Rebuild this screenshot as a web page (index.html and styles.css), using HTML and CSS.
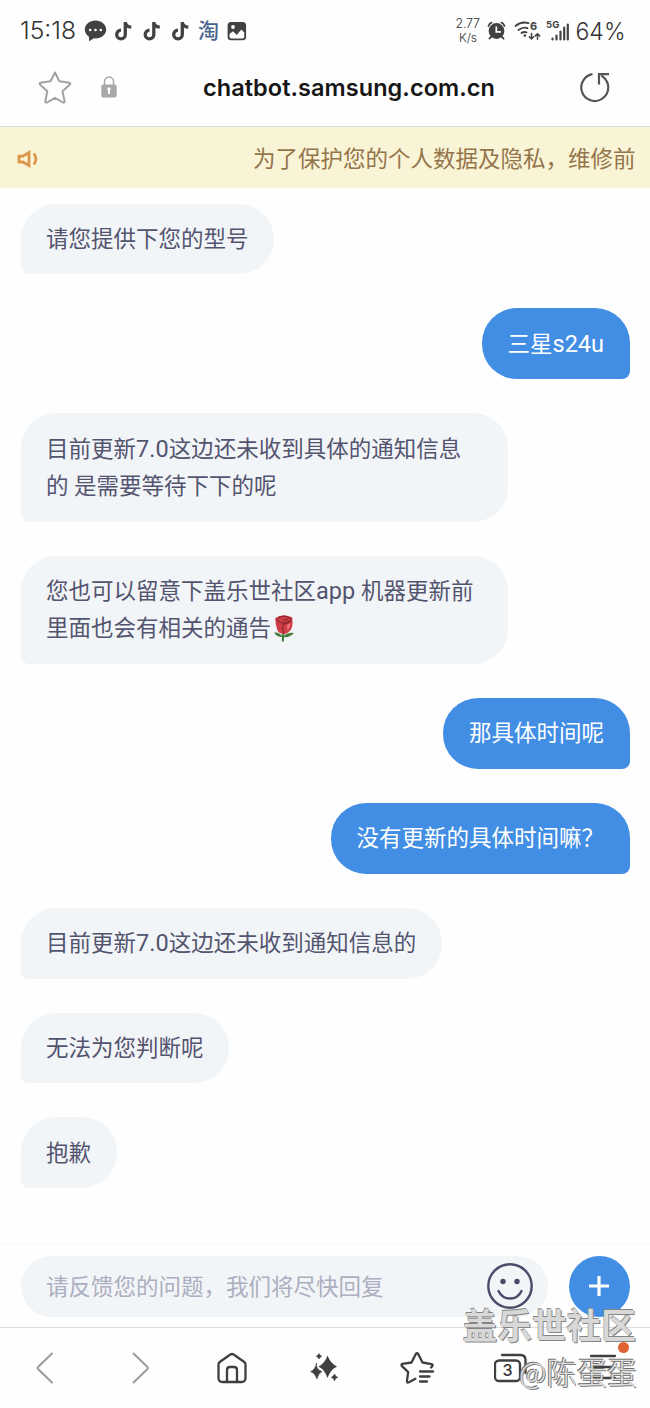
FILE: index.html
```html
<!DOCTYPE html>
<html lang="zh-CN">
<head>
<meta charset="utf-8">
<title>chatbot.samsung.com.cn</title>
<link rel="stylesheet" href="styles.css">
</head>
<body>
<div class="phone">
  <header class="status">
    <svg class="status-art" width="650" height="60" viewBox="0 0 650 60">
      <text class="status-text" x="20" y="39" font-size="24" textLength="56" lengthAdjust="spacingAndGlyphs">15:18</text>
      <path fill="#424242" d="M95.500 20.500c-6 0-10.700 4-10.700 9 0 3 1.600 5.500 4 7.100l.4 4.600 4.600-2.900 1.700.1c6 0 10.700-4 10.700-8.900s-4.700-9-10.700-9z"/>
      <g fill="#fff"><circle cx="90.200" cy="30" r="1.300"/><circle cx="95.500" cy="30" r="1.300"/><circle cx="100.800" cy="30" r="1.300"/></g>
      <g fill="none" stroke="#424242" stroke-width="3.300">
        <path id="note" d="M125.300 22v12.500a4.300 4.300 0 1 1-4.300-4.300M125.300 22.500c.4 2.800 2.300 4.400 6 4.600"/>
        <use href="#note" x="28.500"/><use href="#note" x="57"/>
      </g>
      <text class="app-glyph" x="198" y="38" font-size="21">淘</text>
      <rect x="227.600" y="22" width="18.500" height="18.300" rx="3.500" fill="#424242"/>
      <circle cx="233" cy="27" r="1.900" fill="#fff"/>
      <path fill="#fff" d="M229.500 34l3.500-2.700 3.800 3.700 4.500-5.500 3 3v4.300q0 1.700-1.700 1.700h-11.400q-1.700 0-1.700-1.700z"/>

      <text class="status-text" x="455.500" y="28" font-size="12.500" textLength="24.500">2.77</text>
      <text class="status-text" x="459" y="42" font-size="12" textLength="18">K/s</text>
      <circle cx="496.500" cy="31" r="7.900" fill="#424242"/>
      <path fill="none" stroke="#424242" stroke-width="1.800" stroke-linecap="round" d="M488.500 26q.8-2.400 3-3.300M504.500 26q-.8-2.400-3-3.300M491.500 36.500l-2 2M501.500 36.500l2 2"/>
      <path fill="none" stroke="#fff" stroke-width="1.700" d="M496.300 26.500v5.300h4.700"/>
      <g fill="none" stroke="#424242" stroke-width="1.800" stroke-linecap="round">
        <path d="M515.500 26q6-5 13-2.800M518.500 30q4.500-3.500 9-1.800M521.500 33q2.500-1.700 5-.6"/>
        <path stroke-width="1.500" d="M531.500 33.500v5.500m-2.200-2.200l2.200 2.200 2.200-2.200M537.500 39.200v-5.500m-2.200 2.200l2.200-2.200 2.200 2.200"/>
      </g>
      <circle cx="524.800" cy="35.500" r="1.300" fill="#424242"/>
      <text class="status-bold" x="530" y="29.500" font-size="11">6</text>
      <text class="status-bold" x="546" y="28" font-size="9.500" textLength="13.500">5G</text>
      <path stroke="#424242" stroke-width="2.200" stroke-linecap="round" d="M552.500 38.500v1M556.500 35.500v4M560.500 31.500v8M564.200 27.500v12M567.800 24.500v15"/>
      <text class="status-text" x="575.500" y="39.500" font-size="24" textLength="50" lengthAdjust="spacingAndGlyphs">64%</text>
    </svg>
  </header>

  <div class="address">
    <svg class="bookmark" width="36" height="36" viewBox="0 0 36 36"><path d="M18 3.500l4.400 8.800 10 1.400q1.600.5.500 1.800l-7.400 6.700 2.100 10.100q0 1.700-1.700 1.200L18 28.800l-8 4.700q-1.700.5-1.700-1.200l2-10.100-7.300-6.700q-1-1.300.5-1.800l10-1.400z"/></svg>
    <svg class="lock" width="18" height="24" viewBox="0 0 18 24"><path d="M4.500 10V6.500a4.500 4.500 0 0 1 9 0V10" fill="none" stroke="#a8a8a8" stroke-width="1.500"/><rect x="1.300" y="9.500" width="15.400" height="13" rx="2" fill="#a8a8a8"/><path d="M9 14v5" stroke="#fff" stroke-width="2"/><circle cx="9" cy="14" r="1.700" fill="#fff"/></svg>
    <div class="url">chatbot.samsung.com.cn</div>
    <svg class="reload" width="34" height="34" viewBox="0 0 34 34"><path d="M14.500 4.200A13.500 13.500 0 1 0 27.500 9.300L23.500 5.500M21 14.500V4.200H31"/></svg>
  </div>

  <div class="notice">
    <svg width="22" height="20" viewBox="0 0 22 20"><path d="M2 7.200h4L12 3.500v13L6 13H2z" fill="none" stroke="#db964b" stroke-width="2.800"/><path d="M16.800 4.500q4.300 5.500 0 11" fill="none" stroke="#db964b" stroke-width="2.700"/></svg>
    <span>为了保护您的个人数据及隐私，维修前</span>
  </div>

  <main class="chat">
    <div class="bubble agent">请您提供下您的型号</div>
    <div class="bubble user">三星<span class="latin">s24u</span></div>
    <div class="bubble agent wide">目前更新<span class="latin">7.0</span>这边还未收到具体的通知信息<br>的 是需要等待下下的呢</div>
    <div class="bubble agent wide">您也可以留意下盖乐世社区<span class="latin">app </span>机器更新前<br>里面也会有相关的通告<svg class="rose" width="24" height="28" viewBox="0 0 24 28"><path d="M10.500 14l-.7 12.500" stroke="#3b7a35" stroke-width="2"/><path d="M10 22q-3-5-9-4.500 3 5 9 4.500zM10 22q4-5 11-4-4 5-11 4z" fill="#4d7f42"/><path d="M2.500 3q7-4.500 16.500-.8 1.500 7-.8 12Q15 19 10.500 19 5 18.500 4 14 2 8 2.500 3z" fill="#cf3e45"/><path d="M3 3.500q3 4.500 8 4.300 5 0 7.500-5M5 3q5-3.500 11-.5-2 3.500-6 2.500M11 8q-3 5 0 10.500M18 6q-4 3-7 3" fill="none" stroke="#902831" stroke-width="1.200"/><path d="M14 10q3-1 3.500-3-.5 6-3 8.500z" fill="#ee7475"/></svg></div>
    <div class="bubble user">那具体时间呢</div>
    <div class="bubble user">没有更新的具体时间嘛？</div>
    <div class="bubble agent">目前更新<span class="latin">7.0</span>这边还未收到通知信息的</div>
    <div class="bubble agent">无法为您判断呢</div>
    <div class="bubble agent">抱歉</div>
  </main>

  <div class="composer">
    <div class="field"><span>请反馈您的问题，我们将尽快回复</span>
      <svg width="48" height="48" viewBox="0 0 48 48"><g fill="none" stroke="#4a4b68" stroke-width="2.400" stroke-linecap="round"><circle cx="24" cy="24" r="21.700"/><path d="M12.500 29Q16 36.500 24 36.500T35.500 29"/></g><g fill="#4a4b68"><circle cx="17" cy="19.500" r="2.700"/><circle cx="31" cy="19.500" r="2.700"/></g></svg>
    </div>
    <div class="plus"><svg width="20" height="20" viewBox="0 0 20 20"><path d="M10 0v20M0 10h20" stroke="#fff" stroke-width="3.200"/></svg></div>
  </div>

  <nav class="toolbar">
    <svg class="arrow" width="36" height="36" viewBox="0 0 36 36"><path d="M25 3.500L11 17q-1 1 0 2L25 32.500"/></svg>
    <svg class="arrow" width="36" height="36" viewBox="0 0 36 36"><path d="M13.500 3.500L27.500 17q1 1 0 2L13.500 32.500"/></svg>
    <svg class="tool" width="36" height="36" viewBox="0 0 36 36"><path d="M4.500 14.500q0-1.500 1.200-2.500L16 4.700q2-1.500 4 0L30.300 12q1.200 1 1.200 2.500V28q0 4-4 4h-19q-4 0-4-4z"/><path d="M13 32V20q0-3 3-3h4q3 0 3 3v12"/></svg>
    <svg width="36" height="36" viewBox="0 0 36 36" fill="#3f3f3f"><path d="M20.500 5.500q2.700 7.700 9.500 11-7 3.500-9.500 11.500-2.500-8-9-11.500 6.500-3.300 9-11z"/><path d="M9.500 13q-1 6.500 5.500 8.500-4 2-5 7.500-1.500-5.500-6.300-7.500Q8.500 19.500 9.500 13zM12 3.500q.7 2.100 2.800 2.700-2.100.7-2.800 2.800-.7-2.100-2.800-2.800 2.100-.6 2.800-2.700zM27.500 24q.8 2.700 3.200 3.300-2.400.7-3.200 3.400-.8-2.700-3.200-3.400 2.400-.6 3.200-3.300z" stroke="#3f3f3f" stroke-width=".6"/></svg>
    <svg class="tool" width="36" height="36" viewBox="0 0 36 36"><path d="M31 17.500l1.300-1.400q1-1.500-.8-2L22.500 12.500 18.200 4q-1.200-1.500-2.400 0L11.500 12.500l-9 1.400q-1.600.6-.7 2l6.400 6.200-1.300 9q.2 2 2 1.200l6.500-3.600M20 21.500h13M20 26.500h9.500M20 31.500h7"/></svg>
    <svg class="tool" width="36" height="36" viewBox="0 0 36 36"><rect x="1" y="10.500" width="25" height="20.500" rx="4"/><path d="M8 5h18.500q5 0 5 5v13"/><text x="13.500" y="26" text-anchor="middle">3</text></svg>
    <div class="menu"><svg class="tool" width="36" height="36" viewBox="0 0 36 36"><path d="M4 6h24M4 17h24M4 28h24"/></svg><i class="dot"></i></div>
  </nav>

  <div class="mark mark-site">盖乐世社区</div>
  <div class="mark mark-author">@陈蛋蛋</div>
</div>
</body>
</html>
```
FILE: styles.css
```css
* { box-sizing: border-box; }

body {
  margin: 0;
  background: #fefefe;
  font-family: Roboto, "Noto Sans CJK SC", sans-serif;
}

svg { display: block; flex: none; }

.phone {
  position: relative;
  display: flex;
  flex-direction: column;
  width: 650px;
  height: 1408px;
  overflow: hidden;
}

.status { height: 60px; }
.status-text { font-family: Inter, sans-serif; font-weight: 300; fill: #333; }
.status-bold { font-family: Inter, sans-serif; font-weight: 700; fill: #424242; }
.app-glyph { font-family: "Noto Sans CJK SC", sans-serif; font-weight: 500; fill: #49648e; }

.address {
  display: flex;
  align-items: center;
  height: 66px;
  padding: 0 37px 12px;
}
.bookmark { fill: none; stroke: #a2a2a2; stroke-width: 2; stroke-linejoin: round; }
.lock { margin-left: 27px; }
.url {
  width: 294px;
  margin-left: 85px;
  padding-top: 2px;
  color: #161616;
  font: 600 23.500px/32px Inter, sans-serif;
  letter-spacing: .05px;
  white-space: nowrap;
}
.reload {
  margin-left: 81px;
  fill: none;
  stroke: #555;
  stroke-width: 2.2;
}

.notice {
  display: flex;
  align-items: center;
  justify-content: space-between;
  height: 62px;
  padding: 2px 14.500px 0 17px;
  border-top: 1px solid #dedcd6;
  background: #faf4d6;
  color: #94754b;
  font-size: 22.500px;
}
.notice span { padding-bottom: 3px; }

.chat {
  display: flex;
  flex-direction: column;
  gap: 34px;
  height: 1056px;
  padding: 15.500px 20.500px 0;
}
.bubble {
  flex: none;
  align-self: flex-start;
  padding: 17.300px 25.500px 16.200px;
  border-radius: 35px 35px 35px 8px;
  background: #f2f5f8;
  color: #53546f;
  font-size: 22.500px;
  line-height: 37.400px;
  white-space: nowrap;
}
.user {
  align-self: flex-end;
  border-radius: 35px 35px 8px 35px;
  background: #418ee4;
  color: #fff;
}
.wide { width: 487.500px; }
.latin { font-size: 23.500px; line-height: 1; white-space: pre; }
.rose {
  display: inline-block;
  margin: -5px 0 -5px 2px;
  vertical-align: -2px;
}

.composer {
  display: flex;
  align-items: center;
  justify-content: space-between;
  height: 83px;
  padding: 0 20.500px;
  border-top: 1px solid #f6f6f7;
}
.field {
  display: flex;
  align-items: center;
  justify-content: space-between;
  width: 527px;
  height: 61px;
  padding: 0 13.500px 0 25.500px;
  border-radius: 31px;
  background: #f2f5f8;
  color: #acafc0;
  font-size: 22.500px;
}
.field span { padding-bottom: 3px; }
.plus {
  display: grid;
  place-items: center;
  width: 61px;
  height: 61px;
  border-radius: 50%;
  background: #418ee4;
}

.toolbar {
  display: flex;
  align-items: center;
  justify-content: space-between;
  height: 81px;
  padding: 0 27px 1px;
  border-top: 1px solid #dcdcdc;
}
.arrow { fill: none; stroke: #9b9b9b; stroke-width: 2; stroke-linecap: round; }
.tool {
  fill: none;
  stroke: #3f3f3f;
  stroke-width: 2.3;
  stroke-linecap: round;
  stroke-linejoin: round;
}
.tool text {
  fill: #333;
  stroke: none;
  font: 500 16px Inter, sans-serif;
}
.menu { position: relative; }
.dot {
  position: absolute;
  top: -8px;
  right: -6px;
  width: 11px;
  height: 11px;
  border-radius: 50%;
  background: #de6332;
}

.mark {
  position: absolute;
  line-height: 1;
  white-space: nowrap;
  font-family: "Noto Sans CJK SC", sans-serif;
}
.mark-site {
  left: 462.500px;
  top: 1306.500px;
  color: #d8d8d8;
  font-size: 34.700px;
  font-weight: 700;
  text-shadow: -.5px -1px 0 #858585, 1px 1px 0 #858585;
}
.mark-author {
  left: 519px;
  top: 1356px;
  color: #dedede;
  font-size: 30.200px;
  font-weight: 300;
  text-shadow: -1px -1px 0 #707070, 1px 1px 0 #808080;
}
```
